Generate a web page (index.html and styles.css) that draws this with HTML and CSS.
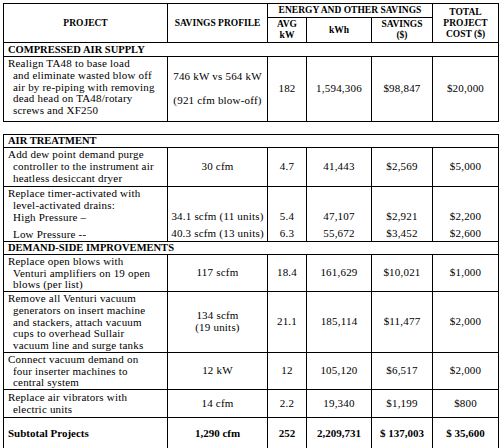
FILE: index.html
```html
<!DOCTYPE html>
<html lang="en">
<head>
    <meta charset="UTF-8">
    <title>Compressed Air Savings Summary</title>
    <link rel="stylesheet" href="styles.css">
</head>
<body>
    <div class="sheet">
        <table class="grid">
            <colgroup>
                <col class="c-project"><col class="c-profile"><col class="c-kw"><col class="c-kwh"><col class="c-sav"><col class="c-cost">
            </colgroup>
            <tr class="h1">
                <th rowspan="2">PROJECT</th>
                <th rowspan="2">SAVINGS PROFILE</th>
                <th colspan="3">ENERGY AND OTHER SAVINGS</th>
                <th rowspan="2">TOTAL<br>PROJECT<br>COST ($)</th>
            </tr>
            <tr class="h2">
                <th>AVG<br>kW</th>
                <th>kWh</th>
                <th>SAVINGS<br>($)</th>
            </tr>
            <tr class="section s1">
                <td colspan="6">COMPRESSED AIR SUPPLY</td>
            </tr>
            <tr class="r-realign">
                <td class="desc"><span class="lead">Realign TA48 to base load</span>and eliminate wasted blow off<br>air by re-piping with removing<br>dead head on TA48/rotary<br>screws and XF250</td>
                <td>746 kW vs 564 kW<br><br>(921 cfm blow-off)</td>
                <td>182</td>
                <td>1,594,306</td>
                <td>$98,847</td>
                <td>$20,000</td>
            </tr>
        </table>

        <table class="grid second">
            <colgroup>
                <col class="c-project"><col class="c-profile"><col class="c-kw"><col class="c-kwh"><col class="c-sav"><col class="c-cost">
            </colgroup>
            <tr class="section s2">
                <td colspan="6">AIR TREATMENT</td>
            </tr>
            <tr class="r-dew">
                <td class="desc"><span class="lead">Add dew point demand purge</span>controller to the instrument air<br>heatless desiccant dryer</td>
                <td>30 cfm</td>
                <td>4.7</td>
                <td>41,443</td>
                <td>$2,569</td>
                <td>$5,000</td>
            </tr>
            <tr class="r-drains">
                <td class="desc"><span class="lead">Replace timer-activated with</span>level-activated drains:<br>High Pressure &ndash;<span class="low">Low Pressure --</span></td>
                <td class="pair">34.1 scfm (11 units)<span class="low">40.3 scfm (13 units)</span></td>
                <td class="pair">5.4<span class="low">6.3</span></td>
                <td class="pair">47,107<span class="low">55,672</span></td>
                <td class="pair">$2,921<span class="low">$3,452</span></td>
                <td class="pair">$2,200<span class="low">$2,600</span></td>
            </tr>
            <tr class="section s3">
                <td colspan="6">DEMAND-SIDE IMPROVEMENTS</td>
            </tr>
            <tr class="r-blows">
                <td class="desc"><span class="lead">Replace open blows with</span>Venturi amplifiers on 19 open<br>blows (per list)</td>
                <td>117 scfm</td>
                <td>18.4</td>
                <td>161,629</td>
                <td>$10,021</td>
                <td>$1,000</td>
            </tr>
            <tr class="r-venturi">
                <td class="desc"><span class="lead">Remove all Venturi vacuum</span>generators on insert machine<br>and stackers, attach vacuum<br>cups to overhead Sullair<br>vacuum line and surge tanks</td>
                <td>134 scfm<br>(19 units)</td>
                <td>21.1</td>
                <td>185,114</td>
                <td>$11,477</td>
                <td>$2,000</td>
            </tr>
            <tr class="r-connect">
                <td class="desc"><span class="lead">Connect vacuum demand on</span>four inserter machines to<br>central system</td>
                <td>12 kW</td>
                <td>12</td>
                <td>105,120</td>
                <td>$6,517</td>
                <td>$2,000</td>
            </tr>
            <tr class="r-vib">
                <td class="desc"><span class="lead">Replace air vibrators with</span>electric units</td>
                <td>14 cfm</td>
                <td>2.2</td>
                <td>19,340</td>
                <td>$1,199</td>
                <td>$800</td>
            </tr>
            <tr class="total">
                <td class="desc"><span class="lead">Subtotal Projects</span></td>
                <td>1,290 cfm</td>
                <td>252</td>
                <td>2,209,731</td>
                <td>$ 137,003</td>
                <td>$ 35,600</td>
            </tr>
            <tr class="r-next">
                <td></td><td></td><td></td><td></td><td></td><td></td>
            </tr>
        </table>
    </div>
</body>
</html>
```

FILE: styles.css
```css
body {
    margin: 0;
    background: #fff;
    color: #000;
    font-family: "Liberation Serif", "DejaVu Serif", serif;
    font-size: 11px;
    letter-spacing: 0.2px;
}
.sheet {
    padding: 3px 0 0 3px;
}
.grid {
    width: 495px;
    table-layout: fixed;
    border-collapse: collapse;
    line-height: 11.75px;
}
.grid.second {
    margin-top: 12px;
}
.c-project { width: 164px; }
.c-profile { width: 100px; }
.c-kw { width: 39px; }
.c-kwh { width: 65px; }
.c-sav { width: 61px; }
.c-cost { width: 66px; }
th, td {
    border: 1px solid #000;
    padding: 0 2px;
    text-align: center;
    vertical-align: middle;
}
th {
    font-weight: bold;
    font-size: 9.5px;
    letter-spacing: 0;
    line-height: 11px;
}
.h1 { height: 14px; }
.h2 { height: 25px; }
.section td {
    text-align: left;
    font-weight: bold;
    font-size: 10.5px;
    letter-spacing: 0;
    padding-left: 4px;
}
.s1 { height: 14px; }
.s2 { height: 13px; }
.s3 { height: 12px; }
td.desc {
    text-align: left;
    vertical-align: top;
    padding: 1px 2px 0 9px;
}
.lead {
    display: block;
    margin-left: -5px;
}
.pair {
    vertical-align: bottom;
    padding-bottom: 1px;
}
.low {
    display: block;
    margin-top: 6px;
}
.r-realign { height: 65px; }
.r-dew { height: 39px; }
.r-drains { height: 55px; }
.r-blows { height: 35px; }
.r-venturi { height: 59px; }
.r-connect { height: 37px; }
.r-vib { height: 28px; }
.r-vib td.desc { padding-top: 2px; }
.total { height: 32px; }
.total td { font-weight: bold; letter-spacing: 0; }
.total td.desc { vertical-align: middle; }
.r-next { height: 20px; }
```
